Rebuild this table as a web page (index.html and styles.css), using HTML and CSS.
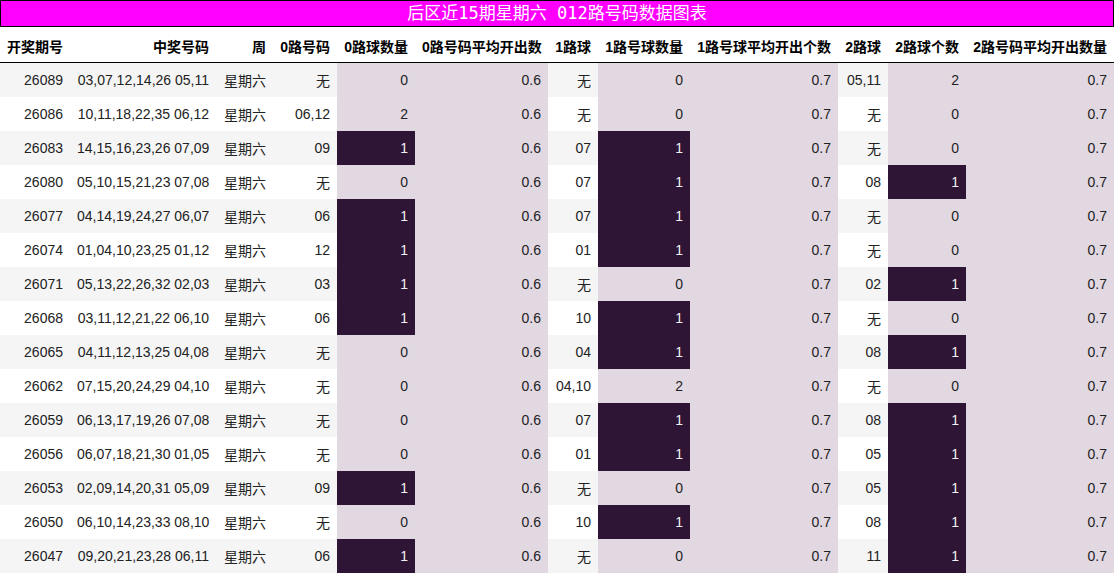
FILE: index.html
```html
<!DOCTYPE html>
<html lang="zh">
<head>
<meta charset="utf-8">
<title>后区近15期星期六 012路号码数据图表</title>
<link rel="stylesheet" href="styles.css">
</head>
<body>
<div class="title">后区近15期星期六 012路号码数据图表</div>
<table class="grid">
<colgroup>
<col class="c1"><col class="c2"><col class="c3"><col class="c4"><col class="c5"><col class="c6"><col class="c7"><col class="c8"><col class="c9"><col class="c10"><col class="c11"><col class="c12">
</colgroup>
<thead>
<tr><th>开奖期号</th><th>中奖号码</th><th>周</th><th>0路号码</th><th>0路球数量</th><th>0路号码平均开出数</th><th>1路球</th><th>1路号球数量</th><th>1路号球平均开出个数</th><th>2路球</th><th>2路球个数</th><th>2路号码平均开出数量</th></tr>
</thead>
<tbody>
<tr><td>26089</td><td>03,07,12,14,26 05,11</td><td>星期六</td><td>无</td><td class="lt">0</td><td class="lt">0.6</td><td>无</td><td class="lt">0</td><td class="lt">0.7</td><td>05,11</td><td class="lt">2</td><td class="lt">0.7</td></tr>
<tr><td>26086</td><td>10,11,18,22,35 06,12</td><td>星期六</td><td>06,12</td><td class="lt">2</td><td class="lt">0.6</td><td>无</td><td class="lt">0</td><td class="lt">0.7</td><td>无</td><td class="lt">0</td><td class="lt">0.7</td></tr>
<tr><td>26083</td><td>14,15,16,23,26 07,09</td><td>星期六</td><td>09</td><td class="hi">1</td><td class="lt">0.6</td><td>07</td><td class="hi">1</td><td class="lt">0.7</td><td>无</td><td class="lt">0</td><td class="lt">0.7</td></tr>
<tr><td>26080</td><td>05,10,15,21,23 07,08</td><td>星期六</td><td>无</td><td class="lt">0</td><td class="lt">0.6</td><td>07</td><td class="hi">1</td><td class="lt">0.7</td><td>08</td><td class="hi">1</td><td class="lt">0.7</td></tr>
<tr><td>26077</td><td>04,14,19,24,27 06,07</td><td>星期六</td><td>06</td><td class="hi">1</td><td class="lt">0.6</td><td>07</td><td class="hi">1</td><td class="lt">0.7</td><td>无</td><td class="lt">0</td><td class="lt">0.7</td></tr>
<tr><td>26074</td><td>01,04,10,23,25 01,12</td><td>星期六</td><td>12</td><td class="hi">1</td><td class="lt">0.6</td><td>01</td><td class="hi">1</td><td class="lt">0.7</td><td>无</td><td class="lt">0</td><td class="lt">0.7</td></tr>
<tr><td>26071</td><td>05,13,22,26,32 02,03</td><td>星期六</td><td>03</td><td class="hi">1</td><td class="lt">0.6</td><td>无</td><td class="lt">0</td><td class="lt">0.7</td><td>02</td><td class="hi">1</td><td class="lt">0.7</td></tr>
<tr><td>26068</td><td>03,11,12,21,22 06,10</td><td>星期六</td><td>06</td><td class="hi">1</td><td class="lt">0.6</td><td>10</td><td class="hi">1</td><td class="lt">0.7</td><td>无</td><td class="lt">0</td><td class="lt">0.7</td></tr>
<tr><td>26065</td><td>04,11,12,13,25 04,08</td><td>星期六</td><td>无</td><td class="lt">0</td><td class="lt">0.6</td><td>04</td><td class="hi">1</td><td class="lt">0.7</td><td>08</td><td class="hi">1</td><td class="lt">0.7</td></tr>
<tr><td>26062</td><td>07,15,20,24,29 04,10</td><td>星期六</td><td>无</td><td class="lt">0</td><td class="lt">0.6</td><td>04,10</td><td class="lt">2</td><td class="lt">0.7</td><td>无</td><td class="lt">0</td><td class="lt">0.7</td></tr>
<tr><td>26059</td><td>06,13,17,19,26 07,08</td><td>星期六</td><td>无</td><td class="lt">0</td><td class="lt">0.6</td><td>07</td><td class="hi">1</td><td class="lt">0.7</td><td>08</td><td class="hi">1</td><td class="lt">0.7</td></tr>
<tr><td>26056</td><td>06,07,18,21,30 01,05</td><td>星期六</td><td>无</td><td class="lt">0</td><td class="lt">0.6</td><td>01</td><td class="hi">1</td><td class="lt">0.7</td><td>05</td><td class="hi">1</td><td class="lt">0.7</td></tr>
<tr><td>26053</td><td>02,09,14,20,31 05,09</td><td>星期六</td><td>09</td><td class="hi">1</td><td class="lt">0.6</td><td>无</td><td class="lt">0</td><td class="lt">0.7</td><td>05</td><td class="hi">1</td><td class="lt">0.7</td></tr>
<tr><td>26050</td><td>06,10,14,23,33 08,10</td><td>星期六</td><td>无</td><td class="lt">0</td><td class="lt">0.6</td><td>10</td><td class="hi">1</td><td class="lt">0.7</td><td>08</td><td class="hi">1</td><td class="lt">0.7</td></tr>
<tr><td>26047</td><td>09,20,21,23,28 06,11</td><td>星期六</td><td>06</td><td class="hi">1</td><td class="lt">0.6</td><td>无</td><td class="lt">0</td><td class="lt">0.7</td><td>11</td><td class="hi">1</td><td class="lt">0.7</td></tr>
</tbody>
</table>
</body>
</html>
```
FILE: styles.css
```css
html, body {
  margin: 0;
  padding: 0;
  background: #fff;
}
body {
  font-family: "Liberation Sans", "Noto Sans CJK SC", sans-serif;
  font-size: 14px;
  color: #222;
}
.title {
  box-sizing: border-box;
  height: 27px;
  border: 1px solid #000;
  background: #ff00ff;
  color: #fff;
  font-family: "DejaVu Sans Mono", "Noto Sans CJK SC", monospace;
  font-size: 17px;
  line-height: 24px;
  text-align: center;
  white-space: pre;
}
.grid {
  width: 1114px;
  table-layout: fixed;
  border-collapse: collapse;
  border-spacing: 0;
}
.c1 { width: 70px; }
.c2 { width: 146px; }
.c3 { width: 57px; }
.c4 { width: 64px; }
.c5 { width: 78px; }
.c6 { width: 133px; }
.c7 { width: 50px; }
.c8 { width: 92px; }
.c9 { width: 148px; }
.c10 { width: 50px; }
.c11 { width: 78px; }
.c12 { width: 148px; }
.grid th,
.grid td {
  padding: 0 7px;
  height: 34px;
  text-align: right;
  white-space: nowrap;
  overflow: hidden;
}
.grid th {
  font-weight: bold;
  color: #000;
  border-bottom: 1px solid #000;
  height: 33px;
  padding-top: 2px;
}
.grid td {
  color: #222;
}
.grid tbody tr:nth-child(odd) td {
  background: #f5f5f5;
}
.grid tbody tr:nth-child(even) td {
  background: #fff;
}
.grid tbody tr td.lt {
  background: #e2d8e2;
}
.grid tbody tr td.hi {
  background: #2f1535;
  color: #f1f1f1;
}
```
